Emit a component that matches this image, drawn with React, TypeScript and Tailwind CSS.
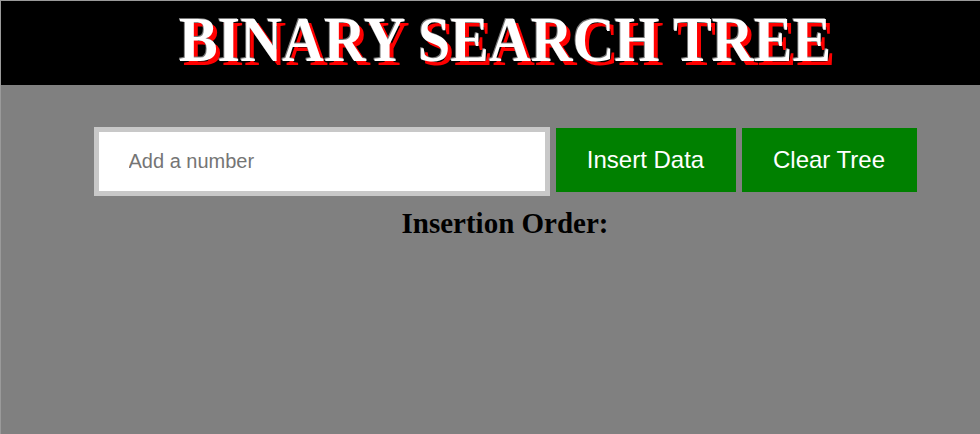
import { useState } from "react";

export default function App() {
  const [value, setValue] = useState("");
  const [order, setOrder] = useState<number[]>([]);

  const insert = () => {
    const n = Number(value);
    if (value.trim() === "" || Number.isNaN(n)) return;
    setOrder([...order, n]);
    setValue("");
  };

  return (
    <div className="min-h-[434px] w-full border-l border-t border-[#9a9a9a] bg-[#808080]">
      {/* header */}
      <div className="flex h-[84px] items-center bg-black pl-[29px]">
        <h1
          className="w-full -translate-y-[3px] scale-y-[1.1] text-center font-['Liberation_Serif',serif] text-[58px] font-bold leading-none text-white [text-shadow:-1px_-1px_0_#777,4px_4px_0_#ff0000]"
        >
          BINARY SEARCH TREE
        </h1>
      </div>

      <div className="flex flex-col items-center pl-[29px] pt-[42px]">
        <form
          onSubmit={(e) => {
            e.preventDefault();
            insert();
          }}
          className="flex items-start gap-[6px]"
        >
          <input
            type="text"
            placeholder="Add a number"
            value={value}
            onChange={(e) => setValue(e.target.value)}
            className="h-[69px] w-[456px] border-[5px] border-[#c8c8c8] bg-white pl-[30px] font-['Liberation_Sans',sans-serif] text-[20px] text-black outline-none placeholder:text-[#757575]"
          />
          <button
            type="submit"
            className="mt-px h-[64px] w-[180px] bg-[#008000] font-['Liberation_Sans',sans-serif] text-[24px] text-white"
          >
            Insert Data
          </button>
          <button
            type="button"
            onClick={() => setOrder([])}
            className="mt-px h-[64px] w-[175px] bg-[#008000] font-['Liberation_Sans',sans-serif] text-[24px] text-white"
          >
            Clear Tree
          </button>
        </form>

        <h2 className="mt-[9px] font-['Liberation_Serif',serif] text-[29px] font-bold leading-tight text-black">
          Insertion Order:{order.length > 0 && " " + order.join(", ")}
        </h2>
      </div>
    </div>
  );
}
